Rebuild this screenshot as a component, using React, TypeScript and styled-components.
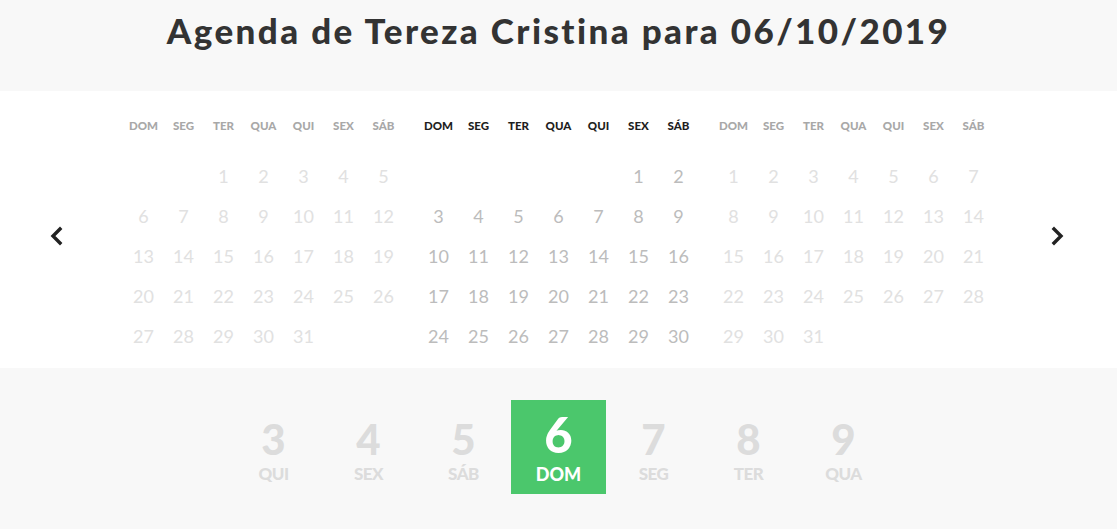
import React from "react";
import styled, { createGlobalStyle } from "styled-components";

const Global = createGlobalStyle`
  html, body { margin: 0; padding: 0; background: #f8f8f8; overflow: hidden; }
  body { font-family: Lato, "Noto Sans", sans-serif; }
  * { box-sizing: border-box; }
`;

const Page = styled.div`
  width: 100%;
  height: 529px;
  display: flex;
  flex-direction: column;
`;

const Header = styled.header`
  height: 91px;
  background: #f8f8f8;
  display: flex;
  justify-content: center;
  padding-top: 8px;
`;

const Title = styled.h1`
  margin: 0;
  font-family: Lato, sans-serif;
  font-weight: 900;
  font-size: 35px;
  line-height: 44px;
  color: #333;
  letter-spacing: 2.4px;
`;

const CalendarSection = styled.section`
  height: 277px;
  background: #fff;
  display: grid;
  grid-template-columns: 1fr auto 1fr;
  align-items: center;
  padding: 23px 0 11px;
`;

const Arrow = styled.button<{ $side: "left" | "right" }>`
  border: 0;
  background: none;
  padding: 0;
  width: 14px;
  height: 20px;
  cursor: pointer;
  justify-self: ${(p) => (p.$side === "left" ? "start" : "end")};
  margin: ${(p) => (p.$side === "left" ? "0 0 0 50px" : "0 53px 0 0")};
  display: flex;
  align-items: center;
  justify-content: center;
`;

const Months = styled.div`
  display: flex;
  gap: 15px;
`;

const Month = styled.div`
  width: 280px;
  display: grid;
  grid-template-columns: repeat(7, 40px);
`;

const WeekHead = styled.div<{ $active: boolean }>`
  height: 20px;
  margin-bottom: 21px;
  display: flex;
  align-items: center;
  justify-content: center;
  font-size: 11.5px;
  font-weight: 900;
  color: ${(p) => (p.$active ? "#1e1e1e" : "#a8a8a8")};
`;

const DayCell = styled.div<{ $active: boolean }>`
  height: 40px;
  display: flex;
  align-items: center;
  justify-content: center;
  font-size: 18px;
  font-weight: 400;
  color: ${(p) => (p.$active ? "#bcbcbc" : "#e1e1e1")};
`;

const Strip = styled.section`
  height: 161px;
  background: #f8f8f8;
  display: flex;
  justify-content: center;
  padding-top: 32px;
`;

const DayItem = styled.div<{ $active: boolean }>`
  width: 95px;
  height: 94px;
  display: flex;
  flex-direction: column;
  align-items: center;
  justify-content: flex-start;
  padding-top: ${(p) => (p.$active ? "5px" : "14px")};
  background: ${(p) => (p.$active ? "#4bc76c" : "transparent")};
  color: ${(p) => (p.$active ? "#fff" : "#dcdcdc")};
`;

const DayNum = styled.div<{ $active: boolean }>`
  font-weight: 900;
  font-size: ${(p) => (p.$active ? "49px" : "42px")};
  line-height: 1.2;
`;

const DayName = styled.div<{ $active: boolean }>`
  font-weight: 900;
  font-size: ${(p) => (p.$active ? "18px" : "17px")};
  letter-spacing: ${(p) => (p.$active ? "0" : "-0.5px")};
  line-height: 1.2;
`;

const WEEK = ["DOM", "SEG", "TER", "QUA", "QUI", "SEX", "SÁB"];

const months = [
  { offset: 2, days: 31, active: false },
  { offset: 5, days: 30, active: true },
  { offset: 0, days: 31, active: false },
];

const strip = [
  { n: 3, d: "QUI" },
  { n: 4, d: "SEX" },
  { n: 5, d: "SÁB" },
  { n: 6, d: "DOM", active: true },
  { n: 7, d: "SEG" },
  { n: 8, d: "TER" },
  { n: 9, d: "QUA" },
];

const Chevron = ({ dir }: { dir: "left" | "right" }) => (
  <svg width="14" height="20" viewBox="0 0 14 20">
    <polyline
      points={dir === "left" ? "10,3 3,10 10,17" : "4,3 11,10 4,17"}
      fill="none"
      stroke="#222"
      strokeWidth="3.4"
      strokeLinecap="square"
    />
  </svg>
);

export default function App() {
  return (
    <>
      <Global />
      <Page>
        <Header>
          <Title>Agenda de Tereza Cristina para 06/10/2019</Title>
        </Header>
        <CalendarSection>
          <Arrow $side="left" aria-label="anterior">
            <Chevron dir="left" />
          </Arrow>
          <Months>
            {months.map((m, mi) => (
              <Month key={mi}>
                {WEEK.map((w) => (
                  <WeekHead key={w} $active={m.active}>
                    {w}
                  </WeekHead>
                ))}
                {Array.from({ length: m.offset }).map((_, i) => (
                  <DayCell key={"e" + i} $active={m.active} />
                ))}
                {Array.from({ length: m.days }).map((_, i) => (
                  <DayCell key={i} $active={m.active}>
                    {i + 1}
                  </DayCell>
                ))}
              </Month>
            ))}
          </Months>
          <Arrow $side="right" aria-label="próximo">
            <Chevron dir="right" />
          </Arrow>
        </CalendarSection>
        <Strip>
          {strip.map((s) => (
            <DayItem key={s.n} $active={!!s.active}>
              <DayNum $active={!!s.active}>{s.n}</DayNum>
              <DayName $active={!!s.active}>{s.d}</DayName>
            </DayItem>
          ))}
        </Strip>
      </Page>
    </>
  );
}
